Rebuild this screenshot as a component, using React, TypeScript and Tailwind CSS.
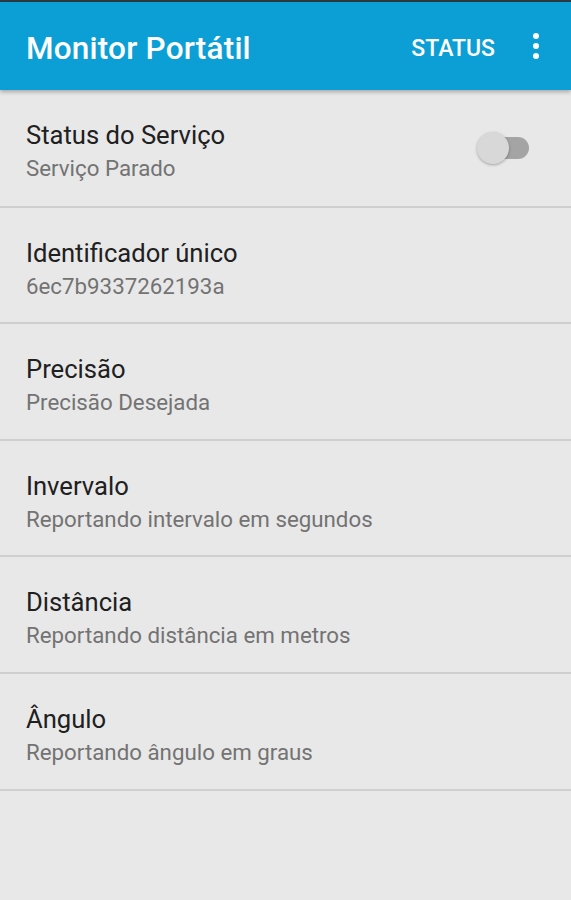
import React from "react";

const rows = [
  { t: "Status do Serviço", s: "Serviço Parado", toggle: true, h: "h-[118px]" },
  { t: "Identificador único", s: "6ec7b9337262193a", h: "h-[116px]" },
  { t: "Precisão", s: "Precisão Desejada", h: "h-[117px]" },
  { t: "Invervalo", s: "Reportando intervalo em segundos", h: "h-[116px]" },
  { t: "Distância", s: "Reportando distância em metros", h: "h-[117px]" },
  { t: "Ângulo", s: "Reportando ângulo em graus", h: "h-[117px]" },
];

export default function App() {
  return (
    <div
      className="w-full h-[900px] bg-[#e8e8e8] overflow-hidden"
      style={{ fontFamily: "Roboto, 'Liberation Sans', sans-serif" }}
    >
      <div className="h-[2px] bg-[#2c3a41]" />
      <div className="relative z-10 h-[88px] bg-[#0c9fd5] shadow-[0_2px_4px_rgba(0,0,0,0.28)] flex items-center pt-[5px] pl-[26px] pr-[26px]">
        <div className="flex-1 text-white text-[31.5px] leading-[36px] font-medium tracking-[0.2px]">
          Monitor Portátil
        </div>
        <div className="text-white text-[23px] leading-[26px] font-medium mr-[37px]">
          STATUS
        </div>
        <svg width="8" height="28" viewBox="0 0 8 28" className="mr-[5px] -mt-[5px]">
          <circle cx="4" cy="4" r="3" fill="white" />
          <circle cx="4" cy="14" r="3" fill="white" />
          <circle cx="4" cy="24" r="3" fill="white" />
        </svg>
      </div>
      <div className="flex flex-col">
        {rows.map((r) => (
          <div
            key={r.t}
            className={`${r.h} border-b-2 border-[#cfcfcf] flex items-start justify-between pl-[26px] pr-[42px]`}
          >
            <div className="flex flex-col pt-[30px]">
              <div className="text-[25.6px] leading-[30px] text-[#202020]">{r.t}</div>
              <div className="text-[22.3px] leading-[26px] text-[#737373] mt-[5px]">{r.s}</div>
            </div>
            {r.toggle && (
              <div className="relative w-[52px] h-[32px] self-center">
                <div className="absolute right-0 top-[5px] w-[40px] h-[22px] rounded-full bg-[#a4a4a4]" />
                <div className="absolute left-0 top-0 w-[32px] h-[32px] rounded-full bg-[#d8d8d8] shadow-[0_1px_3px_rgba(0,0,0,0.3)]" />
              </div>
            )}
          </div>
        ))}
      </div>
    </div>
  );
}
